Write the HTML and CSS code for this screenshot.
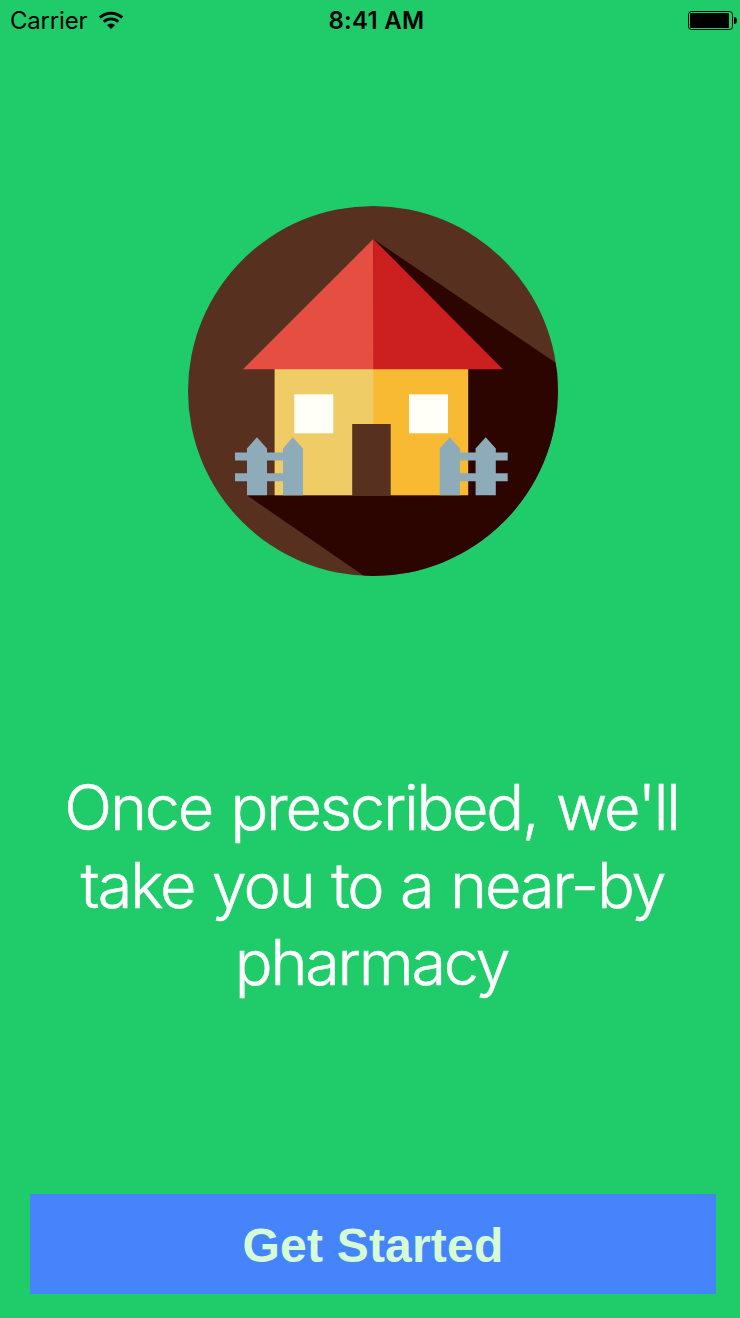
FILE: index.html
```html
<!DOCTYPE html>
<html lang="en">
<head>
  <meta charset="UTF-8">
  <title>Get Started</title>
  <link rel="stylesheet" href="styles.css">
</head>
<body>

  <div class="screen">
    <div class="status-bar">
      <div class="carrier">
        <span class="carrier-name">Carrier</span>
        <svg class="wifi" width="26" height="18" viewBox="0 0 26 18">
          <path d="M1.8 6.6a16.4 16.4 0 0 1 22.4 0" fill="none" stroke="#000" stroke-width="3"/>
          <path d="M5.7 10.7a10.6 10.6 0 0 1 14.6 0" fill="none" stroke="#000" stroke-width="2.8"/>
          <path d="M8.9 14a6 6 0 0 1 8.2 0L13 18z"/>
        </svg>
      </div>
      <span class="time">8:41 AM</span>
      <svg class="battery" width="50" height="20" viewBox="0 0 50 20">
        <rect x=".5" y=".5" width="44" height="18" rx="3" fill="none" stroke="#000"/>
        <rect x="2" y="2" width="39" height="15" rx="1"/>
        <path d="M46 6c2 0 3 1.500 3 3.500s-1 3.500-3 3.500z"/>
      </svg>
    </div>

    <!-- house with long shadow -->
    <svg class="house" width="370" height="370" viewBox="0 0 370 370">
      <defs>
        <clipPath id="circle"><circle cx="185" cy="185" r="185"/></clipPath>
      </defs>
      <circle cx="185" cy="185" r="185" fill="#573020"/>
      <path d="M185.300 33L385 168.500V400H219.500L59 289.300H185.300z" fill="#2d0500" clip-path="url(#circle)"/>
      <rect x="86.600" y="163" width="99.400" height="126.300" fill="#f0cc66"/>
      <rect x="185.300" y="163" width="94.900" height="126.300" fill="#f8ba32"/>
      <path d="M185.300 33l.7 130.300H55z" fill="#e64e42"/>
      <path d="M185.300 33l129.500 130.300H185.300z" fill="#cc1f1f"/>
      <rect x="106.300" y="188.300" width="39" height="39" fill="#fffff7"/>
      <rect x="221" y="188.300" width="39" height="39" fill="#fffff7"/>
      <rect x="164.200" y="218" width="38.500" height="72" fill="#573020"/>
      <g fill="#8dabb8">
        <path d="M59 289.300v-46.800l9.900-11.200 10.100 11.200v46.800z"/>
        <path d="M95 289.300v-46.800l9.900-11.200 10.100 11.200v46.800z"/>
        <path d="M47 246.500h53v8H47zM47 267.200h53v8H47z"/>
        <path d="M251.700 289.300v-46.800l10.100-11.200 10.100 11.200v46.800z"/>
        <path d="M287.600 289.300v-46.800l10.100-11.200 10.100 11.200v46.800z"/>
        <path d="M267 246.500h52.700v8H267zM267 267.200h52.700v8H267z"/>
      </g>
    </svg>

    <p class="message">
      <span class="line">Once prescribed, we'll</span>
      <span class="line line-loose">take you to a near-by</span>
      <span class="line">pharmacy</span>
    </p>

    <button class="start-button">Get Started</button>
  </div>

</body>
</html>
```
FILE: styles.css
```css
* {
  box-sizing: border-box;
}

body {
  margin: 0;
  background: #20cb6a;
  font-family: Inter, "Liberation Sans", sans-serif;
}

.screen {
  height: 1318px;
  display: flex;
  flex-direction: column;
  overflow: hidden;
}

.status-bar {
  height: 40px;
  padding: 0 2px 0 10px;
  display: grid;
  grid-template-columns: 1fr auto 1fr;
  align-items: center;
  color: #000;
  font-size: 24px;
}

.carrier {
  display: flex;
  align-items: center;
  gap: 11px;
}

.carrier-name {
  letter-spacing: -0.2px;
}

.time {
  padding-left: 5px;
  font-weight: 600;
  letter-spacing: 0.3px;
}

.battery {
  justify-self: end;
  margin-top: 2px;
}

.house {
  margin: 166px 0 0 188px;
}

.message {
  margin: 193px 27px 0 30px;
  color: #fff;
  font-size: 63px;
  font-weight: 300;
  line-height: 77.5px;
  letter-spacing: -2.25px;
  word-spacing: 3px;
  text-align: center;
  -webkit-text-stroke: 0.5px #fff;
}

.line {
  display: block;
  white-space: nowrap;
}

.line-loose {
  padding-left: 2px;
  letter-spacing: -2.1px;
  word-spacing: 1.8px;
}

.start-button {
  height: 100px;
  margin: auto 24px 24px 30px;
  padding: 2px 0 0;
  border: none;
  background: #4684fc;
  color: #d6fcd6;
  font-family: "Liberation Sans", Arial, sans-serif;
  font-size: 48px;
  font-weight: bold;
  letter-spacing: 0.2px;
  cursor: pointer;
}
```
